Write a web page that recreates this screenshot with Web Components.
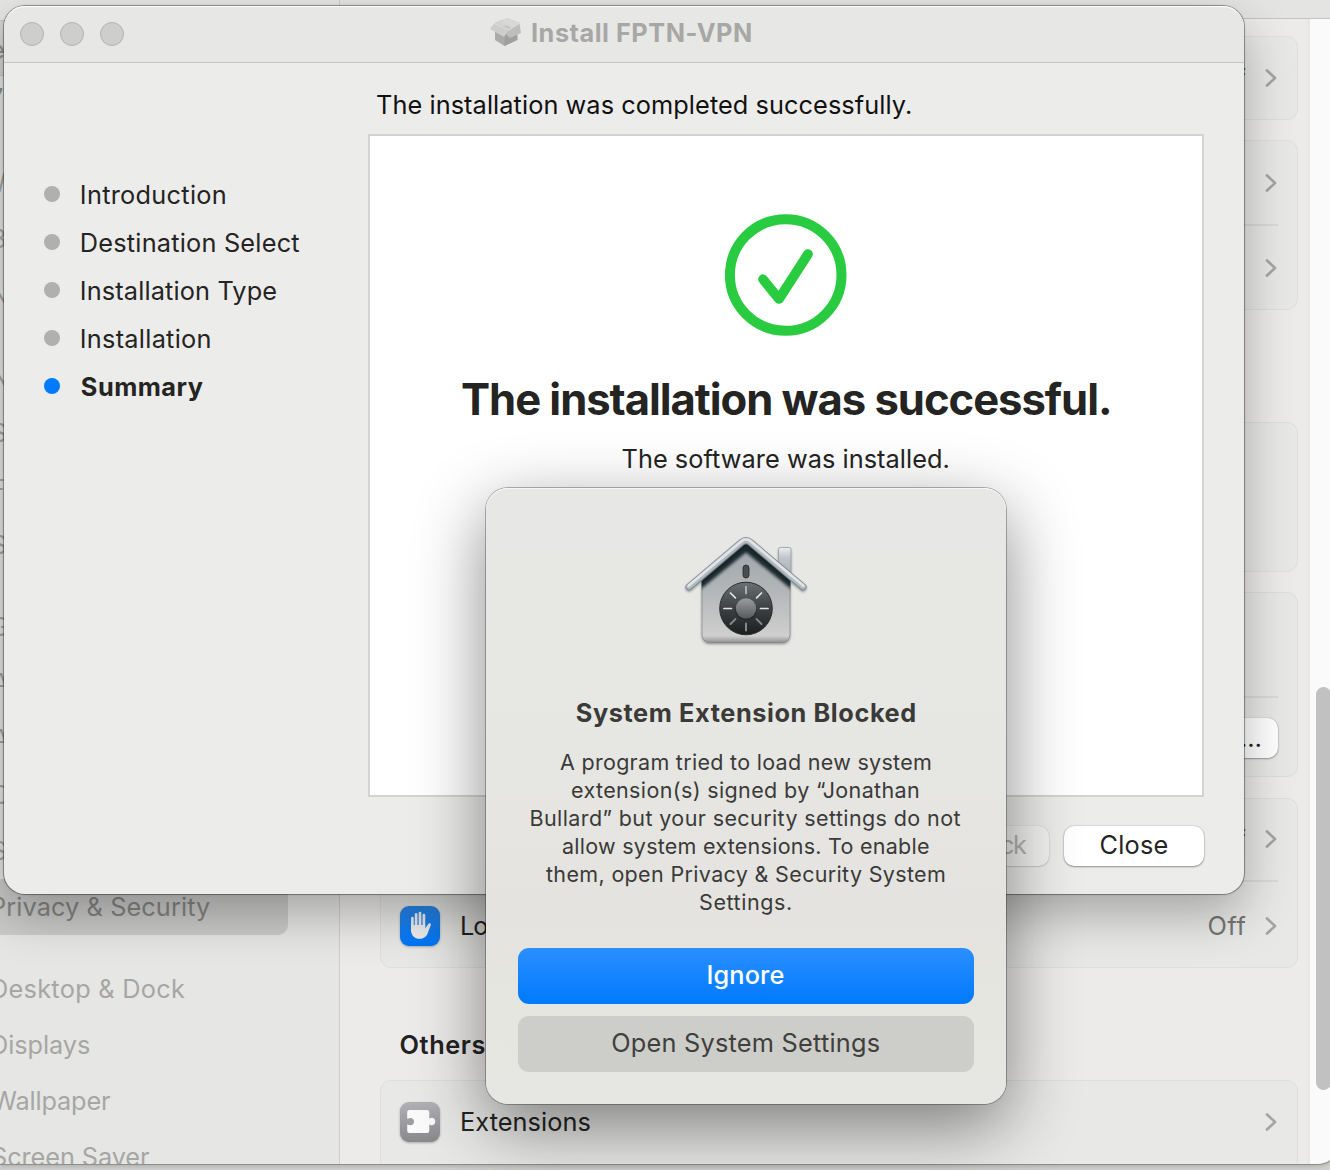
<!DOCTYPE html>
<html lang="en">
<head>
<meta charset="utf-8">
<title>Install FPTN-VPN</title>
<style>
html,body{margin:0;height:100%;overflow:hidden;background:#d1d1d0}
body{font-family:Inter,"Liberation Sans",sans-serif;font-size:25.300px;color:#242423}
</style>
</head>
<body>
<mac-desktop></mac-desktop>
<script>
const ctx = document.createElement('canvas').getContext('2d');
const define = (name, html, setup) => customElements.define(name, class extends HTMLElement {
  constructor() {
    super();
    this.attachShadow({mode: 'open'}).innerHTML = html;
  }
  connectedCallback() { if (setup) setup(this, this.shadowRoot); }
});

/* A single line of text whose tracking is set so that its ink spans the given width. */
define('ui-text', `<style>:host{display:block;flex:none;white-space:nowrap;line-height:30px;height:30px}span{display:inline-block}</style><span><slot></slot></span>`, (el, root) => {
  const cs = getComputedStyle(el), t = el.textContent, w = +el.getAttribute('w');
  ctx.font = `${cs.fontWeight} ${cs.fontSize} ${cs.fontFamily}`;
  const m = ctx.measureText(t), s = root.querySelector('span');
  const bearings = m.width - m.actualBoundingBoxRight - m.actualBoundingBoxLeft;
  const ink = s.getBoundingClientRect().width - bearings;
  const width = w || ink;
  el.style.width = width + 'px';
  s.style.marginLeft = m.actualBoundingBoxLeft + 'px';
  if (w && t.length > 1) s.style.letterSpacing = (w - ink) / (t.length - 1) + 'px';
});

define('ui-chevron', `<style>:host{display:block;flex:none;width:14px;height:20px}svg{display:block}</style>
<svg width="14" height="20" viewBox="0 0 14 20"><path d="M3 2.4 11 10 3 17.6" fill="none" stroke="#a5a5a4" stroke-width="2.7" stroke-linecap="round" stroke-linejoin="round"/></svg>`);

define('settings-card', `<style>:host{display:flex;flex-direction:column;box-sizing:border-box;flex:none;background:#e8e8e6;border:1.5px solid #dededc;border-radius:11px;padding:0 19px}</style><slot></slot>`);

define('settings-row', `<style>
:host{display:flex;flex:1;align-items:center;min-height:0}
:host([line]){border-bottom:2px solid #dadad9}
.grow{flex:1}.gap{width:18.500px;flex:none}
::slotted(svg){margin-right:22px;flex:none}
::slotted([slot=value]){color:#757573}
</style><slot></slot><div class="grow"></div><slot name="value"></slot><div class="gap"></div><ui-chevron></ui-chevron>`);

define('side-item', `<style>:host{display:flex;align-items:center;height:56px;flex:none;margin-left:-8px;color:#a6a6a4}
:host([selected]){background:#cbcbca;color:#858583;width:296px;border-radius:10px}
:host([gap]){margin-top:26px}</style><slot></slot>`);

define('settings-window', `<style>
:host{position:absolute;left:0;top:-60px;width:1339px;height:1224px;box-sizing:border-box;display:flex;overflow:hidden;border-radius:0 0 22px 0;background:#ecebe9;box-shadow:0 0 0 1px #8f8f8e,0 2px 5px #0003}
aside{width:339px;flex:none;display:flex;flex-direction:column;background:#e6e6e4;border-right:1px solid #cdcdcc;box-sizing:content-box}
.account{height:56px;flex:none;box-sizing:border-box;margin-top:80px;background:#d3d3d1;border:solid #c4c4c2;border-width:1px 0;display:flex;align-items:center;color:#8e8e8c;margin-left:-14px;padding:4px 0 0 5px;width:302px}
.note{display:flex;align-items:center;height:44px;flex:none;margin-left:-10px;color:#8e8e8c}
nav{display:flex;flex-direction:column}
main{flex:1;display:flex;flex-direction:column;min-width:0}
.bar{height:78px;flex:none;background:#e4e4e2;border-bottom:1px solid #c4c4c3;box-sizing:content-box}
.body{flex:1;display:flex;min-height:0}
.list{width:918px;flex:none;padding:17px 10px 0 40px;display:flex;flex-direction:column}
.gutter{flex:1;border-left:2px solid #e6e6e6;background:#fafafa;display:flex}
.thumb{width:15px;height:403px;border-radius:8px;background:#c1c1c1;margin:668px 0 0 6px}
.c1{height:83.500px}.c2{height:170px;margin-top:20.500px}.c3{height:149.5px;margin-top:112px}.c4{height:185px;margin-top:20.5px}
.c5{height:170px;margin-top:20.5px}.c6{height:150px}
.others{display:flex;flex:none;align-items:center;font-weight:600;color:#222;height:50px;margin:52.500px 0 10px 20.5px}
.blank{height:103px;border-bottom:2px solid #dadad9;flex:none}
.more{align-self:flex-end;margin-top:20px;width:100px;height:40px;border-radius:10px;background:#fff;box-shadow:0 0 1px #0006,0 1px 2px #0005;display:flex;align-items:center;justify-content:flex-end;padding-right:18px;box-sizing:border-box}
svg{filter:drop-shadow(0 1px 1px #0004)}
</style>
<aside>
 <div class="account"><ui-text>e</ui-text></div>
 <div class="note"><ui-text>7</ui-text></div>
 <nav>
 <side-item style="margin-top:35px"><ui-text>W</ui-text></side-item>
 <side-item><ui-text>B</ui-text></side-item>
 <side-item><ui-text>N</ui-text></side-item>
 <side-item gap><ui-text>N</ui-text></side-item>
 <side-item><ui-text>S</ui-text></side-item>
 <side-item><ui-text>F</ui-text></side-item>
 <side-item><ui-text>S</ui-text></side-item>
 <side-item gap><ui-text>G</ui-text></side-item>
 <side-item><ui-text>A</ui-text></side-item>
 <side-item><ui-text>A</ui-text></side-item>
 <side-item><ui-text>C</ui-text></side-item>
 <side-item><ui-text>S</ui-text></side-item>
 <side-item selected><ui-text w="218">Privacy &amp; Security</ui-text></side-item>
 <side-item gap><ui-text w="193">Desktop &amp; Dock</ui-text></side-item>
 <side-item><ui-text w="98">Displays</ui-text></side-item>
 <side-item><ui-text w="118">Wallpaper</ui-text></side-item>
 <side-item><ui-text w="157">Screen Saver</ui-text></side-item>
 </nav>
</aside>
<main>
 <div class="bar"></div>
 <div class="body">
 <div class="list">
  <settings-card class="c1"><settings-row><ui-text slot="value" w="37">Off</ui-text></settings-row></settings-card>
  <settings-card class="c2"><settings-row line></settings-row><settings-row></settings-row></settings-card>
  <settings-card class="c3"></settings-card>
  <settings-card class="c4"><div class="blank"></div><div class="more"><ui-text>…</ui-text></div></settings-card>
  <settings-card class="c5"><settings-row line><ui-text slot="value" w="37">Off</ui-text></settings-row>
   <settings-row style="padding-top:3px;flex-basis:-2px">
    <svg width="40" height="40" viewBox="0 0 40 40"><defs><linearGradient id="b" x2="0" y2="1"><stop stop-color="#2b86e8"/><stop offset="1" stop-color="#0077fb"/></linearGradient></defs><rect width="40" height="40" rx="9" fill="url(#b)"/>
     <path d="M12.4 12.2V25M16.1 8.4V22M20 7.2V22M23.9 9V22" stroke="#f1f1f1" stroke-width="2.7" stroke-linecap="round"/><path d="M11.1 19h14.1v3.6l3.4-5c1-.9 2.6-.2 2.3 1.2L28 26.5c-1.4 3.900-4 6.300-8 6.300-5.500 0-8.900-3.300-8.900-8.600z" fill="#f1f1f1"/></svg>
    <ui-text w="184">Lockdown Mode</ui-text><ui-text slot="value" w="37">Off</ui-text></settings-row></settings-card>
  <div class="others"><ui-text w="84">Others</ui-text></div>
  <settings-card class="c6"><settings-row style="flex:none;height:82px">
    <svg width="40" height="40" viewBox="0 0 40 40"><defs><linearGradient id="g" x2="0" y2="1"><stop stop-color="#b1b1b5"/><stop offset="1" stop-color="#88888d"/></linearGradient></defs><rect width="40" height="40" rx="9" fill="url(#g)"/>
    <path d="M9.500 8h17.500a2.300 2.300 0 0 1 2.300 2.300v6.200c.8 0 1-.8 2.400-.8 2.100 0 3.600 1.600 3.600 3.800s-1.500 3.800-3.600 3.800c-1.400 0-1.600-.8-2.400-.8v6.300a2.300 2.300 0 0 1-2.300 2.300H9.500a2.300 2.300 0 0 1-2.300-2.300v-6.200c.8 0 1.300.7 3.100.7a3.600 3.600 0 0 0 0-7.400c-1.800 0-2.300.8-3.100.8v-6.400A2.300 2.300 0 0 1 9.500 8z" fill="#fafafa"/></svg>
    <ui-text w="128.500">Extensions</ui-text></settings-row></settings-card>
 </div>
 <div class="gutter"><div class="thumb"></div></div>
 </div>
</main>`);

define('install-step', `<style>:host{display:flex;align-items:center;height:48px;gap:21.800px}
i{width:16px;height:16px;border-radius:50%;background:#b0b0ae;flex:none;margin-top:-2px}
:host([current]){font-weight:700}:host([current]) i{background:#007aff}</style><i></i><slot></slot>`);

define('push-button', `<style>:host{display:flex;box-sizing:border-box;align-items:center;justify-content:center;width:140px;height:40px;border-radius:10px;background:#fff;padding-bottom:2px;box-shadow:0 0 1.500px #0005,0 1px 2px #0005}
:host([disabled]){background:#f2f2f0;color:#b4b4b2;box-shadow:0 0 1.500px #0003,0 1px 1.500px #0002;justify-content:flex-end;padding-right:22px}</style><slot></slot>`);

define('installer-window', `<style>
:host{position:absolute;left:4px;top:6px;width:1240px;height:888px;border-radius:21px;background:#ececea;display:flex;flex-direction:column;box-shadow:0 0 0 1px #0000004d,0 20px 50px rgba(0,0,0,.29),0 0 3px #0003}
header{height:56px;flex:none;background:#e7e7e5;border-bottom:1px solid #c5c5c4;border-radius:21px 21px 0 0;display:flex;align-items:center;box-shadow:inset 0 2px 1px -1px #fff;box-sizing:content-box}
.dots{display:flex;gap:16px;margin-left:16px}.dots i{width:24px;height:24px;border-radius:50%;box-sizing:border-box;background:#cececd;border:1.300px solid #b3b3b2}
header svg{margin:-4px 0 0 366px;flex:none}
header ui-text{font-weight:700;color:#a7a7a6;margin:-3px 0 0 9px}
.content{display:flex;flex:1}
aside{width:324px;padding:108px 0 0 40px;display:flex;flex-direction:column;flex:none}
section{width:836px;display:flex;flex-direction:column}
.lead{margin:27px 0 14px 9px;color:#111}
.pane{width:836px;height:663px;box-sizing:border-box;border:2px solid #d3d3d2;background:#fff;display:flex;flex-direction:column;align-items:center}
.pane svg{margin-top:78px;flex:none}
.h{font-size:43.600px;font-weight:700;height:50px;line-height:50px;margin:39px 1px 0 0}
.sub{margin:19px 1px 0 0}
footer{display:flex;justify-content:flex-end;gap:15px;padding-top:29px}
</style>
<header><div class="dots"><i></i><i></i><i></i></div>
<svg width="33" height="30" viewBox="0 0 33 30"><path d="M5 12 18 12V27L14.500 29 5 23z" fill="#ababaa"/><path d="M14.500 18 27.500 13V23L14.500 29z" fill="#a0a09f"/><path d="M4 6.500 17.500 1 29.500 6 19 13z" fill="#c6c6c5"/><path d="M4 6 11 3l4.500 5-5 1.500z" fill="#d3d3d2"/><path d="m12.500 3 5-2 4.500 2 8.500 2.500-9 5.500-4-3-5 1z" fill="#d8d8d7"/><path d="M4 6.500 19 13l-5 7L0 12z" fill="#cdcdcc"/><path d="m19 13 10.500-6.500L31 16l-11 5-4-4z" fill="#bebebd"/><path d="m4 6.500 15 6.500 10.700-7" fill="none" stroke="#dededd"/></svg>
<ui-text w="219">Install FPTN-VPN</ui-text></header>
<div class="content"><aside>
<install-step><ui-text w="143">Introduction</ui-text></install-step>
<install-step><ui-text w="217.500">Destination Select</ui-text></install-step>
<install-step><ui-text w="194.500">Installation Type</ui-text></install-step>
<install-step><ui-text w="127.700">Installation</ui-text></install-step>
<install-step current><ui-text w="121">Summary</ui-text></install-step>
</aside><section>
<ui-text class="lead" w="534">The installation was completed successfully.</ui-text>
<div class="pane">
<svg width="122" height="122" viewBox="0 0 122 122" fill="none" stroke="#29cc41"><circle cx="60.700" cy="61" r="55.800" stroke-width="10"/><path d="M38 65.200 54 85 83 40" stroke-width="9.700" stroke-linecap="round" stroke-linejoin="round"/></svg>
<ui-text class="h" w="647">The installation was successful.</ui-text>
<ui-text class="sub" w="326">The software was installed.</ui-text>
</div>
<footer><push-button disabled><ui-text w="91">Go Back</ui-text></push-button><push-button><ui-text w="67">Close</ui-text></push-button></footer>
</section></div>`);

define('alert-button', `<style>:host{display:flex;width:456px;height:56px;flex:none;box-sizing:border-box;padding-bottom:2px;align-items:center;justify-content:center;border-radius:11px;background:#cdcdc9;color:#3f3f3d}
:host([primary]){background:linear-gradient(#2a8fff,#007aff);color:#fff;font-weight:500}</style><slot></slot>`);

define('vault-icon', `<style>:host,svg{display:block}</style>
<svg width="152" height="140" viewBox="0 0 152 140"><defs>
<linearGradient id="w" x2="0" y2="1"><stop stop-color="#9ca3a8"/><stop offset=".5" stop-color="#b4b7b9"/><stop offset=".93" stop-color="#cfcfce"/><stop offset="1" stop-color="#8b8d8e"/></linearGradient>
<linearGradient id="d" x2="0" y2="1"><stop stop-color="#6b7074"/><stop offset=".5" stop-color="#3c4042"/><stop offset="1" stop-color="#1c1f20"/></linearGradient>
<linearGradient id="k" x2="0" y2="1"><stop stop-color="#9a9da0"/><stop offset="1" stop-color="#55595c"/></linearGradient>
<linearGradient id="c" x2="0" y2="1"><stop stop-color="#eceeef"/><stop offset=".3" stop-color="#bfc5c9"/><stop offset="1" stop-color="#a4abb0"/></linearGradient>
<filter id="s" x="-20%" y="-20%" width="140%" height="150%"><feDropShadow dx="0" dy="1.300" stdDeviation="1.300" flood-opacity=".35"/></filter>
<filter id="f"><feGaussianBlur stdDeviation="1.600"/></filter>
<clipPath id="p"><path d="M31.500 60 76 22l44.500 38v55a8 8 0 0 1-8 8h-73a8 8 0 0 1-8-8z"/></clipPath></defs>
<g filter="url(#s)"><rect x="108.500" y="27.500" width="12.500" height="34" rx="2" fill="url(#c)" stroke="#8d9499" stroke-width=".7"/>
<path d="M31.500 60 76 22l44.500 38v55a8 8 0 0 1-8 8h-73a8 8 0 0 1-8-8z" fill="url(#w)"/></g>
<g clip-path="url(#p)"><path d="M22 68 76 24l54 44" fill="none" stroke="#111c20" stroke-width="13" filter="url(#f)" opacity=".9"/></g>
<path d="M32 66v49a7.500 7.500 0 0 0 7.500 7.500h73a7.500 7.500 0 0 0 7.500-7.500V66" fill="none" stroke="#818589" stroke-width="1" opacity=".7"/>
<g filter="url(#s)"><path d="M19 67 71.500 22.500q4.500-3.600 9 0L133 67" fill="none" stroke="#7c868e" stroke-width="7" stroke-linecap="round"/></g>
<path d="M19 66.700 71.500 22.200q4.500-3.600 9 0L133 66.700" fill="none" stroke="#b1babf" stroke-width="5.400" stroke-linecap="round"/>
<path d="M18.500 65.700 71.500 21.200q4.500-3.400 9 0l53 44.500" fill="none" stroke="#e1e5e8" stroke-width="2.600" stroke-linecap="round"/>
<rect x="73" y="45" width="6" height="13" rx="3" fill="#4a4e51" stroke="#222628" stroke-width=".8"/>
<circle cx="76" cy="88.500" r="26.300" fill="url(#d)" stroke="#2a2d2f"/>
<g stroke="#e2e5e7" stroke-width="1.700" stroke-linecap="round"><path d="M76 66.500v7" stroke="#b9bdc0"/><path d="m60.500 73 4.900 4.900M91.500 73l-4.900 4.900"/><path d="M54 88.500h7.500M90.500 88.500H98" /><path d="m60.500 104 4.900-4.900M91.500 104l-4.900-4.900M76 110.500v-7" stroke="#85888a" stroke-width="2"/></g>
<circle cx="76" cy="89.500" r="10.600" fill="#222526"/><circle cx="76" cy="88.500" r="10.200" fill="url(#k)"/></svg>`);

define('system-alert', `<style>
:host{position:absolute;left:486px;top:488px;width:520px;height:616px;border-radius:22px;background:linear-gradient(#e7e7e5,#e7e7e4 35%,#e4e3df 68%,#e6e7e2 100%);display:flex;flex-direction:column;align-items:center;box-shadow:inset 0 1px 0 #f7f7f6,0 0 0 1px #00000047,0 22px 70px rgba(0,0,0,.47)}
vault-icon{margin-top:32px}
h1{margin:38px 0 0;height:30px;font-size:inherit;font-weight:700;color:#3a3a38}
.msg{margin-top:21px;display:flex;flex-direction:column;align-items:center;font-size:21.500px;color:#3a3a38;padding-right:1px}
.msg ui-text{height:28px;line-height:27px}
alert-button{margin-top:12px}.msg+alert-button{margin-top:31px}
</style>
<vault-icon></vault-icon>
<h1><ui-text w="338.500">System Extension Blocked</ui-text></h1>
<div class="msg">
<ui-text w="371">A program tried to load new system</ui-text>
<ui-text w="347">extension(s) signed by “Jonathan</ui-text>
<ui-text w="430">Bullard” but your security settings do not</ui-text>
<ui-text w="367">allow system extensions. To enable</ui-text>
<ui-text w="399">them, open Privacy &amp; Security System</ui-text>
<ui-text w="91">Settings.</ui-text>
</div>
<alert-button primary><ui-text w="75">Ignore</ui-text></alert-button>
<alert-button><ui-text w="267.500">Open System Settings</ui-text></alert-button>`);

define('mac-desktop', `<style>:host{display:block;position:relative;width:1330px;height:1170px;overflow:hidden;background:#d1d1d0}</style>
<settings-window></settings-window><installer-window></installer-window><system-alert></system-alert>`);
</script>
</body>
</html>
